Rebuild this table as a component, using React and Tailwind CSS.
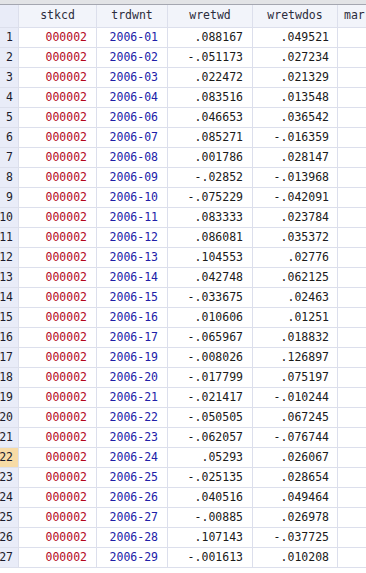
const rows = [
  ['2006-01', '.088167', '.049521'],
  ['2006-02', '-.051173', '.027234'],
  ['2006-03', '.022472', '.021329'],
  ['2006-04', '.083516', '.013548'],
  ['2006-06', '.046653', '.036542'],
  ['2006-07', '.085271', '-.016359'],
  ['2006-08', '.001786', '.028147'],
  ['2006-09', '-.02852', '-.013968'],
  ['2006-10', '-.075229', '-.042091'],
  ['2006-11', '.083333', '.023784'],
  ['2006-12', '.086081', '.035372'],
  ['2006-13', '.104553', '.02776'],
  ['2006-14', '.042748', '.062125'],
  ['2006-15', '-.033675', '.02463'],
  ['2006-16', '.010606', '.01251'],
  ['2006-17', '-.065967', '.018832'],
  ['2006-19', '-.008026', '.126897'],
  ['2006-20', '-.017799', '.075197'],
  ['2006-21', '-.021417', '-.010244'],
  ['2006-22', '-.050505', '.067245'],
  ['2006-23', '-.062057', '-.076744'],
  ['2006-24', '.05293', '.026067'],
  ['2006-25', '-.025135', '.028654'],
  ['2006-26', '.040516', '.049464'],
  ['2006-27', '-.00885', '.026978'],
  ['2006-28', '.107143', '-.037725'],
  ['2006-29', '-.001613', '.010208'],
]

const cols = 'grid grid-cols-[19px_78px_71px_85px_85px_1fr]'
const cell = 'border-r border-b border-[#dcdfec] flex items-center overflow-hidden whitespace-nowrap'

export default function App() {
  return (
    <div
      className="w-[366px] h-[573px] overflow-hidden bg-white text-[11.5px] leading-none"
      style={{ fontFamily: '"DejaVu Sans Mono", "Liberation Mono", monospace' }}
    >
      {/* scrollbar edge */}
      <div className="h-[5px] bg-[#e2e3e6] border-b border-[#a4a6b0]" />

      {/* header */}
      <div className={`${cols} h-[23px] bg-[#f2f4fa] text-[#2c2c3c]`}>
        <div className={`${cell} bg-[#e9ecf8]`} />
        <div className={`${cell} justify-center`}>stkcd</div>
        <div className={`${cell} justify-center`}>trdwnt</div>
        <div className={`${cell} justify-center`}>wretwd</div>
        <div className={`${cell} justify-center`}>wretwdos</div>
        <div className={`${cell} pl-[6px] border-r-0`}>mar</div>
      </div>

      {rows.map(([wk, a, b], i) => (
        <div key={i} className={`${cols} h-[20px]`}>
          <div
            className={`${cell} justify-end pr-[5px] text-[#1c1c2c] ${
              i === 21 ? 'bg-[#f7dba6]' : 'bg-[#e9ecf8]'
            }`}
          >
            {i + 1}
          </div>
          <div className={`${cell} justify-end pr-[9px] text-[#b4081e]`}>000002</div>
          <div className={`${cell} justify-end pr-[9px] text-[#2020a8]`}>{wk}</div>
          <div className={`${cell} justify-end pr-[9px] text-[#1a1a1a]`}>{a}</div>
          <div className={`${cell} justify-end pr-[8px] text-[#1a1a1a]`}>{b}</div>
          <div className={`${cell} border-r-0`} />
        </div>
      ))}
    </div>
  )
}
